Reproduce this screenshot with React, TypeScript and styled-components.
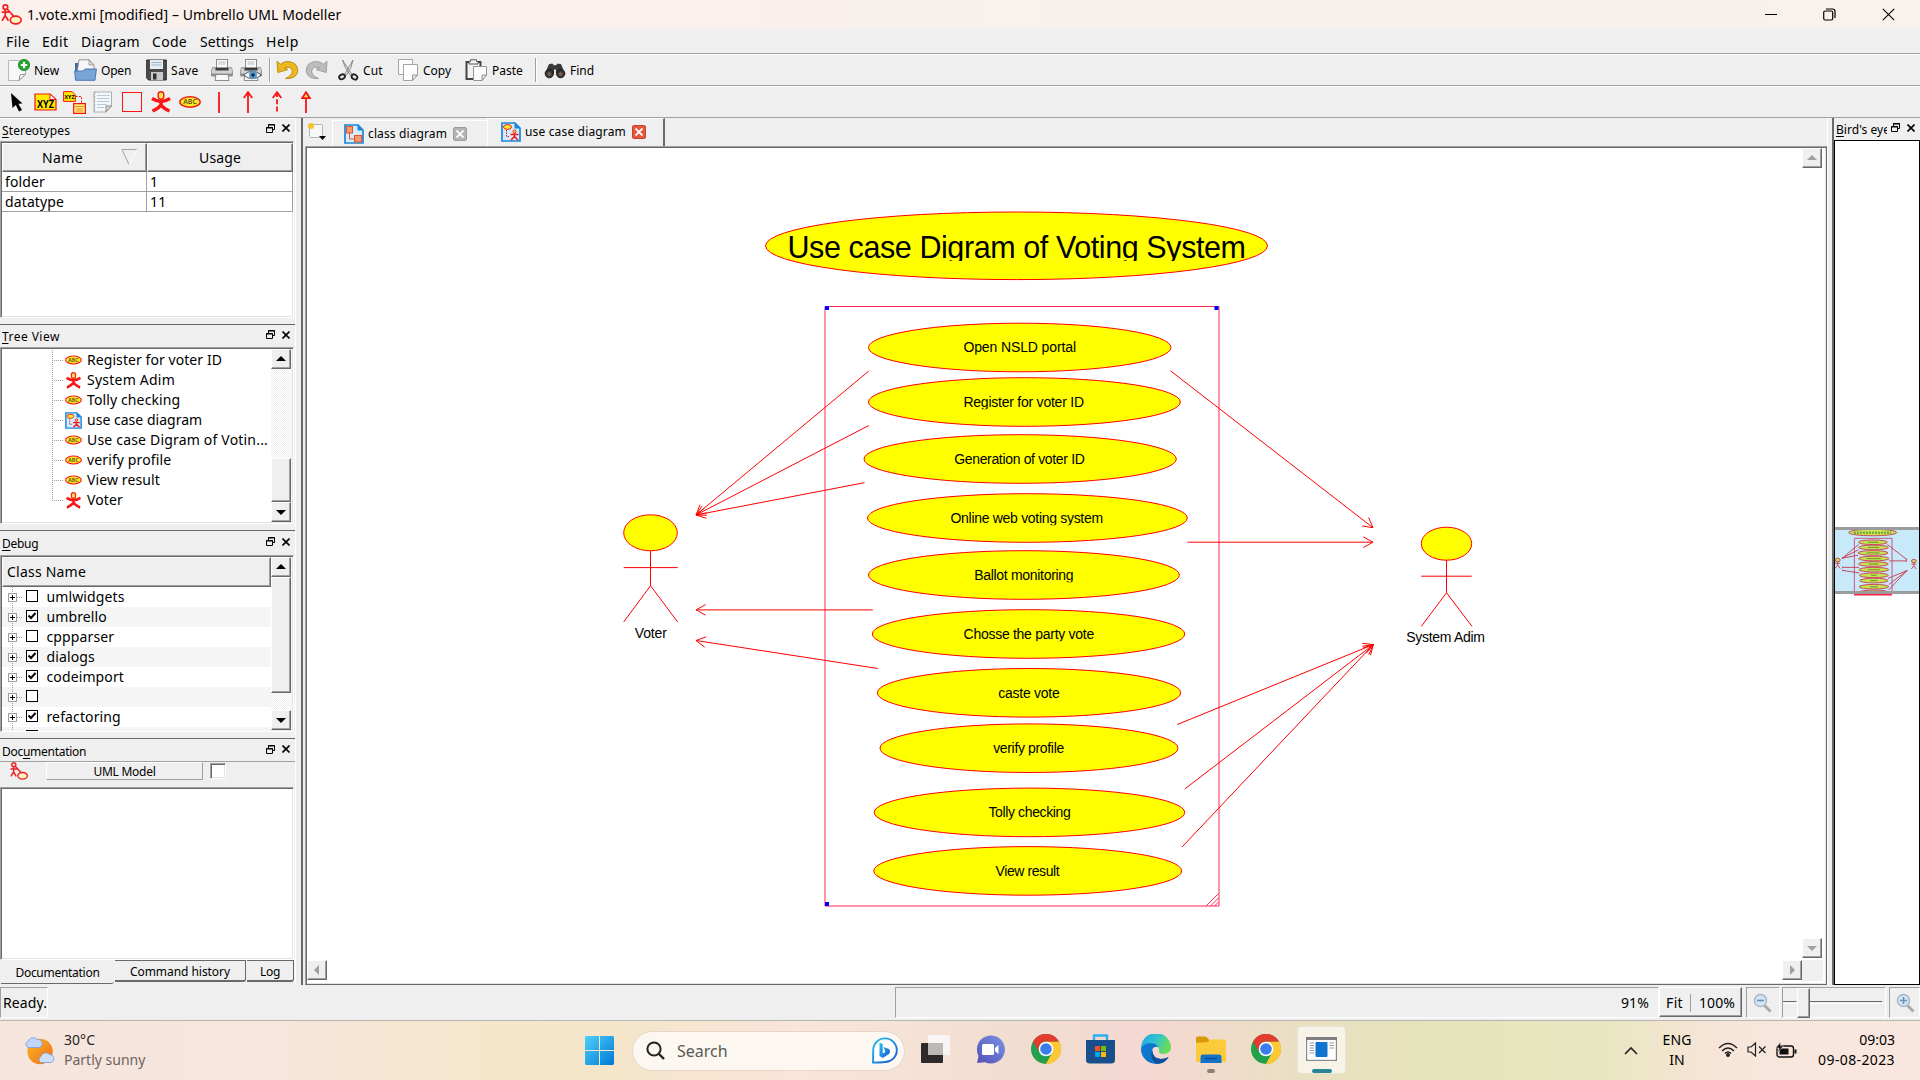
import React from "react";
import styled, { createGlobalStyle, css } from "styled-components";

const UI = `"Noto Sans", "Open Sans", sans-serif`;
const FACE = "#efefef";
const SHADE = "#a0a0a0";
const DARK = "#696969";

const Global = createGlobalStyle`
  * { box-sizing: border-box; }
  html, body { margin: 0; padding: 0; overflow: hidden; }
  body { font-family: ${UI}; font-size: 14px; line-height: 20px; color: #000; }
  svg { display: block; flex: none; }
`;

const raised = css`
  background: ${FACE};
  border: 1px solid;
  border-color: #fff ${DARK} ${DARK} #fff;
  box-shadow: inset -1px -1px 0 ${SHADE};
`;
const sunken = css`
  border: 1px solid;
  border-color: ${SHADE} #fff #fff ${SHADE};
  box-shadow: inset 1px 1px 0 ${DARK}, inset -1px -1px 0 #e3e3e3;
`;

const Screen = styled.div`
  width: 1920px;
  height: 1080px;
  display: flex;
  flex-direction: column;
  background: ${FACE};
`;

/* ---------- text ---------- */
const Label = styled.span<{ $small?: boolean; $gap?: number; $color?: string }>`
  font-size: ${(p) => (p.$small ? 12 : 14)}px;
  letter-spacing: ${(p) => p.$gap ?? 0.12}px;
  color: ${(p) => p.$color ?? "#000"};
  white-space: pre;
`;

/* ---------- title and menus ---------- */
const TitleBar = styled.header`
  height: 29px;
  display: flex;
  align-items: center;
  padding-left: 1px;
  background: linear-gradient(90deg, #fcf0ec 0%, #faf0ec 35%, #f6f1eb 70%, #f8f1ec 100%);
`;
const TitleText = styled(Label)`
  margin-left: 5px;
  flex: 1;
`;
const WindowButtons = styled.div`
  display: flex;
  gap: 46px;
  padding-right: 25px;
`;
const MenuBar = styled.nav`
  height: 25px;
  display: flex;
  align-items: center;
  padding: 1px 0 0 6px;
  border-bottom: 1px solid ${SHADE};
`;
const MenuItem = styled(Label)<{ $w: number }>`
  width: ${(p) => p.$w}px;
`;

/* ---------- toolbars ---------- */
const Toolbar = styled.div`
  height: 32px;
  display: flex;
  align-items: center;
  padding-left: 8px;
  border-top: 1px solid #fff;
  border-bottom: 1px solid ${SHADE};
`;
const Tool = styled.div<{ $w: number }>`
  width: ${(p) => p.$w}px;
  display: flex;
  align-items: center;
  gap: 4px;
  line-height: 22px;
`;
const ToolLabel = styled(Label)`
  padding-top: 1px;
`;
const ToolSeparator = styled.i<{ $after: number }>`
  width: 2px;
  height: 24px;
  margin-right: ${(p) => p.$after}px;
  border-left: 1px solid ${SHADE};
  border-right: 1px solid #fff;
`;

/* ---------- workspace ---------- */
const Workspace = styled.div`
  height: 867px;
  display: flex;
`;
const LeftColumn = styled.aside`
  width: 295px;
  flex: none;
  display: flex;
  flex-direction: column;
`;
const Splitter = styled.div<{ $w: number }>`
  width: ${(p) => p.$w}px;
  flex: none;
  border-right: 2px solid ${DARK};
  border-left: 1px solid #fff;
`;
const Dock = styled.section<{ $h: number; $first?: boolean; $last?: boolean }>`
  height: ${(p) => p.$h}px;
  padding-bottom: ${(p) => (p.$last ? 0 : 6)}px;
  display: flex;
  flex-direction: column;
  border-top: ${(p) => (p.$first ? "1px solid #fff" : `1px solid ${DARK}`)};
`;
const DockHead = styled.div<{ $h: number; $line?: boolean; $drop: number }>`
  height: ${(p) => p.$h}px;
  flex: none;
  display: flex;
  align-items: center;
  padding: ${(p) => p.$drop}px 5px 0 2px;
  border-bottom: ${(p) => (p.$line ? 1 : 0)}px solid ${SHADE};
  overflow: hidden;
`;
const DockTitle = styled(Label)`
  flex: 1;
  min-width: 0;
  margin-right: 4px;
  overflow: hidden;
`;
const Mnemonic = styled.span`
  text-decoration: underline;
  text-underline-offset: 2px;
`;
const DockButtons = styled.div`
  display: flex;
  gap: 7px;
  padding-bottom: 5px;
  align-items: center;
`;
const SunkenBox = styled.div`
  ${sunken}
  flex: 1;
  min-height: 0;
  margin-right: 1px;
  padding: 1px;
  display: flex;
  background: #fff;
  overflow: hidden;
`;

const Table = styled.div`
  flex: 1;
  display: grid;
  grid-template-columns: 145px 146px;
  grid-template-rows: 29px 20px 20px;
`;
const HeadCell = styled.div`
  ${raised}
  display: flex;
  align-items: center;
  justify-content: center;
  position: relative;
`;
const SortMark = styled.svg`
  position: absolute;
  right: 8px;
  top: 4px;
`;
const Cell = styled.div`
  padding-left: 3px;
  border-right: 1px solid ${SHADE};
  border-bottom: 1px solid ${SHADE};
  line-height: 20px;
`;

const ScrollTrack = styled.div`
  width: 21px;
  flex: none;
  display: flex;
  flex-direction: column;
  background: repeating-conic-gradient(#fff 0 25%, #efefef 0 50%) 0 0 / 2px 2px;
`;
const ScrollButton = styled.div`
  ${raised}
  width: 20px;
  height: 20px;
  display: flex;
  align-items: center;
  justify-content: center;
`;
const ScrollGap = styled.div`
  flex: 1;
`;
const ScrollThumb = styled.div<{ $h: number }>`
  ${raised}
  width: 20px;
  height: ${(p) => p.$h}px;
`;

const TreeList = styled.div`
  flex: 1;
  padding: 1px 0 0 50px;
`;
const TreeRow = styled.div`
  height: 20px;
  display: flex;
  align-items: center;
`;
const Branch = styled.i<{ $last: boolean }>`
  width: 11px;
  height: 20px;
  margin-right: 2px;
  background:
    repeating-linear-gradient(90deg, ${SHADE} 0 1px, transparent 1px 2px) 0 10px / 11px 1px no-repeat,
    repeating-linear-gradient(${SHADE} 0 1px, transparent 1px 2px) 0 0 / 1px ${(p) => (p.$last ? 10 : 20)}px no-repeat;
`;
const TreeText = styled(Label)`
  margin-left: 5px;
`;

const DebugList = styled.div`
  flex: 1;
`;
const DebugHead = styled.div`
  ${raised}
  height: 30px;
  display: flex;
  align-items: center;
  padding-left: 4px;
`;
const DebugRow = styled.div<{ $alt: boolean }>`
  height: 20px;
  display: flex;
  align-items: center;
  padding-left: 6px;
  background: ${(p) => (p.$alt ? "#f5f5f5" : "#fff")};
`;
const DebugText = styled(Label)`
  margin-left: 8.5px;
`;

const DocBar = styled.div`
  height: 25px;
  flex: none;
  display: flex;
  align-items: flex-start;
  padding-left: 10px;
`;
const DocButton = styled.div`
  width: 157px;
  height: 18px;
  margin: 0 7px 0 18px;
  text-align: center;
  line-height: 16px;
  border: 1px solid;
  border-color: #fff ${SHADE} ${SHADE} #fff;
`;
const DocCheck = styled.div`
  ${sunken}
  width: 16px;
  height: 16px;
  margin-top: 1px;
  background: #fff;
`;
const DockTabs = styled.div`
  height: 25px;
  flex: none;
  display: flex;
  align-items: flex-start;
`;
const DockTab = styled.div<{ $w: number; $on?: boolean }>`
  width: ${(p) => p.$w}px;
  height: ${(p) => (p.$on ? 24 : 22)}px;
  margin-left: 1px;
  text-align: center;
  line-height: ${(p) => (p.$on ? 24 : 20)}px;
  border-style: solid;
  border-color: ${DARK};
  border-width: ${(p) => (p.$on ? "0 0 1px 0" : "1px 1px 2px 0")};
  border-bottom-right-radius: 3px;
`;

/* ---------- centre ---------- */
const Centre = styled.main`
  width: 1524px;
  flex: none;
  display: flex;
  flex-direction: column;
`;
const TabStrip = styled.div`
  height: 28px;
  display: flex;
  align-items: flex-end;
  padding-left: 4px;
`;
const NewTab = styled.div`
  width: 25px;
  height: 24px;
`;
const DiagramTab = styled.div<{ $w: number; $on?: boolean }>`
  width: ${(p) => p.$w}px;
  height: ${(p) => (p.$on ? 28 : 26)}px;
  display: flex;
  align-items: center;
  padding: ${(p) => (p.$on ? "0 0 2px 13px" : "0 0 0 11px")};
  border-top: 1px solid #fff;
  border-left: 1px solid #fff;
  border-right: ${(p) => (p.$on ? `2px solid ${DARK}` : "0")};
`;
const TabText = styled(Label)`
  margin: 0 6px 0 4px;
`;
const CloseBox = styled.div<{ $on?: boolean }>`
  width: 14px;
  height: 14px;
  display: flex;
  align-items: center;
  justify-content: center;
  border-radius: 2px;
  border: 1px solid ${(p) => (p.$on ? "#c7412b" : "#9b9b9b")};
  background: ${(p) => (p.$on ? "#e2593f" : "#b4b4b4")};
`;
const CanvasFrame = styled.div`
  ${sunken}
  flex: 1;
  display: grid;
  grid-template-columns: 1495px 21px;
  grid-template-rows: 812px 21px;
  margin-left: 2px;
  background: #fff;
  border-right-color: ${DARK};
  border-bottom-color: ${DARK};
  padding: 1px 4px 1px 1px;
`;
const HScroll = styled.div`
  display: flex;
  justify-content: space-between;
`;
const Corner = styled.div`
  background: ${FACE};
`;
const VScroll = styled.div`
  display: flex;
  flex-direction: column;
  justify-content: space-between;
  padding-bottom: 2px;
`;

/* ---------- overview ---------- */
const RightColumn = styled.aside`
  flex: 1;
  min-width: 0;
  display: flex;
  flex-direction: column;
`;
const Overview = styled.div`
  flex: 1;
  display: flex;
  flex-direction: column;
  padding-top: 386px;
  border: 1px solid #000;
  background: #fff;
`;

/* ---------- status ---------- */
const StatusBar = styled.footer`
  height: 36px;
  display: flex;
  align-items: flex-start;
  padding-top: 2px;
  border-bottom: 1px solid #b8b4ae;
`;
const StatusCell = styled.div<{ $w: number; $after?: number }>`
  width: ${(p) => p.$w}px;
  height: 31px;
  flex: none;
  margin-right: ${(p) => p.$after ?? 0}px;
  display: flex;
  align-items: center;
  padding: 1px 0 0 2px;
  border: 1px solid;
  border-color: ${SHADE} #fff #fff ${SHADE};
`;
const StatusSpace = styled.div`
  width: 847px;
`;
const ZoomValue = styled(Label)`
  flex: 1;
  text-align: right;
  padding-right: 9px;
`;
const ZoomButtons = styled.div`
  ${raised}
  width: 83px;
  height: 30px;
  flex: none;
  margin-right: 4px;
  display: flex;
  align-items: center;
  padding: 1px 0 0 6px;
`;
const ZoomDivider = styled.i`
  width: 1px;
  height: 18px;
  margin: 0 8px 0 7px;
  background: ${SHADE};
`;
const SliderCell = styled(StatusCell)`
  padding: 0;
`;
const Groove = styled.div<{ $w: number }>`
  width: ${(p) => p.$w}px;
  height: 3px;
  border: 1px solid;
  border-color: ${DARK} #fff #fff ${DARK};
  border-left-width: 0;
`;
const SliderThumb = styled.div`
  ${raised}
  width: 13px;
  height: 30px;
`;
const MagnifyPad = styled.div`
  padding-left: 4px;
`;

/* ---------- taskbar ---------- */
const Taskbar = styled.footer`
  height: 59px;
  display: flex;
  align-items: center;
  background: linear-gradient(90deg, #f6e5dc 0, #f6e6de 250px, #f5e6cc 480px, #f5e5cb 620px, #fae5da 800px, #f1ddd0 1030px, #f5d8d2 1150px, #eadfc3 1290px, #e6e4bb 1420px, #e8e6c0 1600px, #f6e5d7 1710px, #f9e7df 1820px, #f9e6de 1920px);
`;
const Weather = styled.div`
  width: 585px;
  display: flex;
  align-items: center;
  padding-left: 25px;
  gap: 8px;
`;
const Stack = styled.div<{ $align?: string; $w?: number }>`
  ${(p) => (p.$w ? `width: ${p.$w}px;` : "")}
  display: flex;
  flex-direction: column;
  align-items: ${(p) => p.$align ?? "flex-start"};
  padding-bottom: 1px;
`;
const SearchBox = styled.div`
  width: 273px;
  height: 40px;
  margin: 0 3px 0 18px;
  padding: 0 6px 0 13px;
  display: flex;
  align-items: center;
  border-radius: 20px;
  border: 1px solid #e6d6cb;
  background: #fdf7f2;
`;
const SearchText = styled.span`
  flex: 1;
  margin-left: 12px;
  font-size: 16px;
  color: #5c5855;
`;
const AppSlot = styled.div<{ $on?: boolean }>`
  width: ${(p) => (p.$on ? 49 : 55)}px;
  height: 48px;
  margin-left: ${(p) => (p.$on ? 4 : 0)}px;
  display: flex;
  flex-direction: column;
  align-items: center;
  justify-content: flex-end;
  border-radius: 5px;
  background: ${(p) => (p.$on ? "rgba(255,255,255,.62)" : "transparent")};
  border: 1px solid ${(p) => (p.$on ? "rgba(120,110,90,.12)" : "transparent")};
`;
const AppMark = styled.i<{ $kind?: "dot" | "bar" }>`
  width: ${(p) => (p.$kind === "bar" ? 20 : 8)}px;
  height: 4px;
  margin-top: ${(p) => (p.$kind === "bar" ? 8 : 5)}px;
  border-radius: 2px;
  background: ${(p) => (p.$kind === "bar" ? "#2a8594" : p.$kind === "dot" ? "#8d8279" : "transparent")};
`;
const Apps = styled.div`
  display: flex;
  align-items: center;
  padding-bottom: 1px;
`;
const Tray = styled.div`
  flex: 1;
  display: flex;
  align-items: center;
  justify-content: flex-end;
  padding-right: 25px;
`;
const TrayIcons = styled.div`
  display: flex;
  align-items: center;
  gap: 9px;
  margin: 0 21px 0 2px;
  padding-bottom: 2px;
`;

/* ---------- drawings ---------- */
const UmbrelloIcon = ({ s = 20 }: { s?: number }) => (
  <svg width={s} height={s} viewBox="0 0 20 20" fill="none" stroke="#f02020" strokeWidth="1.6">
    <circle cx="4.2" cy="3" r="2.2" />
    <path d="M4 5.5V11M0.6 7.8H7.6M4 11L1 16M4 11L7 16M6 5L12 11.5" />
    <ellipse cx="14" cy="15.3" rx="5.2" ry="3.7" fill="#fdf6c0" />
  </svg>
);
const UseCaseIcon = ({ w = 22, h = 12 }: { w?: number; h?: number }) => (
  <svg width={w} height={h} viewBox="0 0 22 12">
    <ellipse cx="11" cy="6" rx="10.2" ry="5.2" fill="#ffe92a" stroke="#f01818" strokeWidth="1.4" />
    <text x="4.3" y="8.4" fontSize="6.500" fontWeight="600" textLength="13.5" lengthAdjust="spacingAndGlyphs" fontFamily="Open Sans" fill="#54430a">ABC</text>
  </svg>
);
const ActorIcon = ({ s = 22 }: { s?: number }) => (
  <svg width={s} height={s} viewBox="0 0 22 22">
    <path d="M2 7.5Q7 10.5 11 10.5T20 7.5M11 9V15M11 14Q8 18 2.5 20M11 14Q14 18 19.5 20" fill="none" stroke="#fb1414" strokeWidth="3.4" />
    <ellipse cx="11" cy="4.5" rx="2.9" ry="3.7" fill="#ffe74a" stroke="#fb1414" strokeWidth="1.4" />
  </svg>
);
const NewIcon = () => (
  <svg width="22" height="22" viewBox="0 0 22 22">
    <path d="M.5 1.5H17.5V15L11 21.5H.5Z" fill="#f8f8f8" stroke="#b8b8b8" />
    <path d="M11 21.5L12 16L17.5 15Z" fill="#fff" stroke="#909090" />
    <circle cx="16" cy="6" r="5.6" fill="#23a52c" stroke="#15801d" strokeWidth=".8" />
    <path d="M16 2.8V9.2M12.8 6H19.2" stroke="#fff" strokeWidth="2.2" />
  </svg>
);
const OpenIcon = () => (
  <svg width="23" height="22" viewBox="0 0 23 22">
    <path d="M1 4H8L10 6V20H1Z" fill="#3c6ca5" />
    <path d="M5 .8H15L20 6V14H3Z" fill="#f7f7f7" stroke="#8a8a8a" strokeWidth=".9" />
    <path d="M15 .8V6H20Z" fill="#ddd" stroke="#888" strokeWidth=".7" />
    <path d="M.6 12H9L11 10H22.4L21 21.3H1.6Z" fill="#79a4d6" stroke="#3f70ad" strokeWidth=".9" />
  </svg>
);
const SaveIcon = () => (
  <svg width="21" height="22" viewBox="0 0 21 22">
    <path d="M.7 1H20.3V21H2.5L.7 19Z" fill="#4b4b4b" stroke="#2b2b2b" />
    <rect x="4" y="1" width="13" height="9" fill="#e6edf2" />
    <path d="M5.5 3.5H15.5M5.5 6H15.5" stroke="#9bb4c6" />
    <rect x="5" y="13" width="12" height="8" fill="#c9c9c9" />
    <rect x="7" y="14.5" width="3.5" height="6" fill="#333" />
  </svg>
);
const PrintIcon = ({ preview }: { preview?: boolean }) => (
  <svg width="22" height="22" viewBox="0 0 22 22">
    <rect x="5.5" y=".5" width="11" height="9" fill="#fafafa" stroke="#8c8c8c" />
    <path d="M7.5 3H14.5M7.5 5H14.5" stroke="#bbb" />
    <path d="M1.500 8.500H4V10H18V8.500H20.500L21.500 12V16.500H.5V12Z" fill="#d2d2d2" stroke="#8a8a8a" strokeWidth=".8" />
    <path d="M4.500 8.500H17.500V11.500H4.500Z" fill="#3c3c3c" />
    <path d="M.5 14.500H21.500V17.500H.5Z" fill="#8f8f8f" />
    <path d="M5 15.5H17L18 21.5H4Z" fill="#f8f8f8" stroke="#8c8c8c" />
    {preview && (
      <g>
        <path d="M3.5 16Q12 8.5 21.5 16Q12 23.5 3.5 16Z" fill="#f4f6f8" stroke="#555" />
        <circle cx="13" cy="16" r="4" fill="#5a98cc" />
        <circle cx="13" cy="16" r="1.7" fill="#102a44" />
      </g>
    )}
  </svg>
);
const UndoIcon = ({ redo }: { redo?: boolean }) => (
  <svg width="23" height="20" viewBox="0 0 23 20">
    <path
      transform={redo ? "translate(23 0) scale(-1 1)" : undefined}
      d="M1 1.2L1.8 12.5L12 9.5L8.5 8Q14.5 5.5 16.3 10.5Q17 15 9.5 18.6Q20.5 19 21.7 11.5Q22 2.5 12.5 1.5Q7.5 1.2 4.5 4.3Z"
      fill={redo ? "#bdbdbd" : "#eeb81f"}
      stroke={redo ? "#9a9a9a" : "#b8860b"}
      strokeWidth=".9"
    />
  </svg>
);
const CutIcon = () => (
  <svg width="21" height="22" viewBox="0 0 21 22">
    <path d="M4.5 1L14 15.5L12.2 16.2Q6 8 4.5 1ZM15 1L6.5 15.5L8.4 16.2Q14 9 15 1Z" fill="#e2e2e2" stroke="#777" strokeWidth=".8" />
    <ellipse cx="4" cy="17.8" rx="3" ry="2.3" transform="rotate(-30 4 17.8)" fill="none" stroke="#222" strokeWidth="1.9" />
    <ellipse cx="16.5" cy="18" rx="3" ry="2.3" transform="rotate(30 16.5 18)" fill="none" stroke="#222" strokeWidth="1.9" />
  </svg>
);
const CopyIcon = () => (
  <svg width="21" height="22" viewBox="0 0 21 22">
    <path d="M.5.5H14.5V15.5H.5Z" fill="#fbfbfb" stroke="#a4a4a4" />
    <path d="M5.5 5.5H19.5V16L14.5 21.5H5.5Z" fill="#fdfdfd" stroke="#a4a4a4" />
    <path d="M14.5 21.5V16H19.5Z" fill="#e9e9e9" stroke="#999" />
  </svg>
);
const PasteIcon = () => (
  <svg width="23" height="22" viewBox="0 0 23 22">
    <path d="M1.5 3H15.5V20H1.5Z" fill="#f2f2f2" stroke="#444" strokeWidth="2" />
    <path d="M5.5.8H11.5V2.5H13V5H4V2.5H5.5Z" fill="#f8f8f8" stroke="#555" />
    <path d="M8.5 7.5H21.5V16L17 21.5H8.5Z" fill="#fbfbfb" stroke="#949494" />
    <path d="M17 21.5V16H21.5Z" fill="#e4e4e4" stroke="#949494" />
  </svg>
);
const FindIcon = () => (
  <svg width="22" height="17" viewBox="0 0 22 18">
    <path d="M4.5 2.5L8 1.5L10 3.5H12L14 1.5L17.5 2.5L21.5 12H12V8H10V12H.5Z" fill="#3a3a3a" />
    <circle cx="5" cy="12.3" r="4.4" fill="#333" stroke="#151515" />
    <circle cx="17" cy="12.3" r="4.4" fill="#333" stroke="#151515" />
    <circle cx="5" cy="12.8" r="2.2" fill="#7a5a4c" />
    <circle cx="17" cy="12.8" r="2.2" fill="#7a5a4c" />
  </svg>
);
const CursorIcon = () => (
  <svg width="16" height="20" viewBox="0 0 16 20">
    <path d="M3 1L14.500 11.5L10.300 11.800L14 18L11 19.400L7.800 13L4.500 16Z" fill="#000" />
  </svg>
);
const ClassIcon = () => (
  <svg width="23" height="18" viewBox="0 0 23 18">
    <path d="M1 1H16L22 6.5V17H1Z" fill="#ffe900" stroke="#f01414" strokeWidth="1.2" />
    <path d="M16 1V6.5H22Z" fill="#fff" stroke="#f01414" />
    <text x="3" y="14.5" fontSize="10" fontWeight="700" textLength="17" lengthAdjust="spacingAndGlyphs" fontFamily="Open Sans">XYZ</text>
  </svg>
);
const PackageIcon = () => (
  <svg width="23" height="23" viewBox="0 0 23 23">
    <path d="M.6.6H9L12.4 4V10.4H.6Z" fill="#ffe900" stroke="#f01414" />
    <text x="1.5" y="8.3" fontSize="6" fontWeight="700" textLength="10" lengthAdjust="spacingAndGlyphs" fontFamily="Open Sans">XYZ</text>
    <path d="M12.5 5.5H18.5V12" fill="none" stroke="#f01414" strokeDasharray="2 1.4" />
    <path d="M10.7 12.6H22.4V22.3H10.7Z" fill="#fff27a" stroke="#f01414" strokeWidth="1.2" />
    <path d="M10.7 15.6H22.4M13 18H20M13 20H20" stroke="#f08030" />
  </svg>
);
const NoteIcon = () => (
  <svg width="20" height="22" viewBox="0 0 20 22">
    <path d="M1 1H18.5V15L13 21H1Z" fill="#f4f6f8" stroke="#a8adb2" />
    <path d="M4 4.5H16.5M4 7.5H16.5M4 10.5H16.5M4 13.5H14M4 16.5H11" stroke="#b6cadb" />
    <path d="M13 21V15H18.5Z" fill="#ddd" stroke="#888" />
    <path d="M1.7 1V21" stroke="#999" strokeDasharray="1 1" />
  </svg>
);
const BoxIcon = () => (
  <svg width="21" height="21" viewBox="0 0 21 21">
    <rect x=".5" y=".5" width="19" height="19" fill="none" stroke="#fb1414" />
  </svg>
);
const LineIcon = ({ kind }: { kind: "line" | "arrow" | "dash" | "gen" }) => (
  <svg width="11" height="22" viewBox="0 0 11 22" fill="none" stroke="#fb1414" strokeWidth="1.8">
    <path d="M5 1V22" strokeDasharray={kind === "dash" ? "5 2.2" : undefined} />
    {(kind === "arrow" || kind === "dash") && <path d="M.7 7L5 1.2L9.300 7" />}
    {kind === "gen" && <path d="M1.100 7.2L5 1.2L8.900 7.2Z" fill="#ffe94a" />}
  </svg>
);
const FloatIcon = () => (
  <svg width="9" height="9" viewBox="0 0 9 9" fill="none" stroke="#000">
    <path d="M2.5 3V.5H8.5V5.5H6.5M2 1H9M.5 3.5H6.5V8.5H.5ZM0 4H7" />
  </svg>
);
const CrossIcon = ({ s = 8, c = "#000", w = 1.6 }: { s?: number; c?: string; w?: number }) => (
  <svg width={s} height={s} viewBox="0 0 8 8" stroke={c} strokeWidth={w}>
    <path d="M.5.5L7.5 7.5M7.5.5L.5 7.5" />
  </svg>
);
const Arrow = ({ dir, c = "#000" }: { dir: "up" | "down" | "left" | "right"; c?: string }) => {
  const d = { up: "M0 7L5 2L10 7Z", down: "M0 3L5 8L10 3Z", left: "M7 0L2 5L7 10Z", right: "M3 0L8 5L3 10Z" }[dir];
  return (
    <svg width="10" height="10" viewBox="0 0 10 10">
      <path d={d} fill={c} />
    </svg>
  );
};
const DiagramFileIcon = ({ kind, s = 20 }: { kind: "class" | "use"; s?: number }) => (
  <svg width={s} height={s} viewBox="0 0 20 20">
    <path d="M1 1H14L19 6V19H1Z" fill="#d3ecfb" stroke="#1c86dc" strokeWidth="1.7" />
    <path d="M13.5.5L19.5 6.5H13.5Z" fill="#1c86dc" />
    {kind === "class" ? (
      <g fill="#f79a70" stroke="#e2532a">
        <rect x="2.5" y="2.5" width="6" height="6.5" />
        <rect x="10.5" y="11.5" width="7" height="6.5" />
        <path d="M5.5 9V15H10.5" fill="none" />
      </g>
    ) : (
      <g fill="none" stroke="#f01818">
        <ellipse cx="6.5" cy="5" rx="4" ry="2.400" fill="#ffe92a" />
        <path d="M5.5 8V14.5H9" strokeDasharray="1.5 1" />
        <circle cx="13.5" cy="9.5" r="1.5" fill="#ffe92a" />
        <path d="M9.5 12.5H17.5M13.5 11V15M13.5 14.5L10 18M13.5 14.5L17 18" strokeWidth="1.6" />
      </g>
    )}
  </svg>
);
const NewTabIcon = () => (
  <svg width="20" height="20" viewBox="0 0 20 20">
    <rect x="2.5" y="2.5" width="13" height="13" rx="1" fill="#f7f7f7" stroke="#b4b4b4" />
    <circle cx="4" cy="4" r="3" fill="#f2c327" />
    <path d="M12 14H19L15.5 18Z" fill="#000" />
  </svg>
);
const Expander = () => (
  <svg width="16" height="20" viewBox="0 0 16 20">
    <path d="M4.5 0V20M9 10.5H15" stroke={SHADE} strokeDasharray="1 1" />
    <rect x=".5" y="6.5" width="8" height="8" fill="#fff" stroke={SHADE} />
    <path d="M2 10.5H7M4.5 8V13" stroke="#000" />
  </svg>
);
const Check = ({ on }: { on: boolean }) => (
  <svg width="14" height="20" viewBox="0 0 14 20">
    <rect x="2.5" y="3.5" width="11" height="11" fill="#fff" stroke="#000" />
    {on && <path d="M4.5 8.5L7 11L11.5 6" fill="none" stroke="#000" strokeWidth="2" />}
  </svg>
);
const ZoomIcon = ({ plus }: { plus?: boolean }) => (
  <svg width="19" height="20" viewBox="0 0 19 20">
    <path d="M11.5 12.5L17.5 18.5" stroke="#a9a9a9" strokeWidth="3" />
    <circle cx="7.5" cy="7.5" r="6" fill="#d5e5f4" stroke="#a7b6c6" strokeWidth="1.5" />
    <path d={plus ? "M4 7.5H11M7.5 4V11" : "M4 7.5H11"} stroke="#6f90bb" strokeWidth="1.7" />
  </svg>
);
const Magnify = ({ plus }: { plus?: boolean }) => (
  <MagnifyPad>
    <ZoomIcon plus={plus} />
  </MagnifyPad>
);

/* ---------- diagram model ---------- */
type Case = { name: string; x1: number; x2: number; y: number; tx: number; tw: number };
const cases: Case[] = [
  { name: "Open NSLD portal", x1: 868.5, x2: 1171, y: 347.5, tx: 963.4, tw: 112.6 },
  { name: "Register for voter ID", x1: 868.5, x2: 1180.3, y: 402, tx: 963.4, tw: 120.6 },
  { name: "Generation of voter ID", x1: 864, x2: 1176.3, y: 459, tx: 954.2, tw: 130.6 },
  { name: "Online web voting system", x1: 867.5, x2: 1187.3, y: 518, tx: 950.5, tw: 152.6 },
  { name: "Ballot monitoring", x1: 868.5, x2: 1179.3, y: 575, tx: 974.2, tw: 99.4 },
  { name: "Chosse the party vote", x1: 872.3, x2: 1184.7, y: 634, tx: 963.6, tw: 130.6 },
  { name: "caste vote", x1: 877.3, x2: 1180.7, y: 692.8, tx: 998.2, tw: 61.6 },
  { name: "verify profile", x1: 880, x2: 1178, y: 748.2, tx: 993.2, tw: 71 },
  { name: "Tolly checking", x1: 874.2, x2: 1184.7, y: 812.4, tx: 988.4, tw: 82.4 },
  { name: "View result", x1: 873.8, x2: 1181.7, y: 870.9, tx: 995.6, tw: 64 },
];
const links: [number, number, number, number][] = [
  [868.8, 371, 696, 515],
  [868.8, 425.5, 696, 515],
  [864.5, 482.7, 696, 515],
  [872.8, 609.9, 696, 609.9],
  [877.9, 668.5, 696, 640.5],
  [1170.5, 370.8, 1373, 527.7],
  [1187.5, 542.2, 1373, 542.2],
  [1177.3, 724.5, 1373.3, 644.6],
  [1184.7, 789, 1373.3, 644.6],
  [1182, 847, 1373.3, 644.6],
];
const headPath = ([x1, y1, x2, y2]: [number, number, number, number]) => {
  const a = Math.atan2(y2 - y1, x2 - x1);
  const wing = (t: number) => `${x2 - 11 * Math.cos(a + t)} ${y2 - 11 * Math.sin(a + t)}`;
  return `M${wing(0.5)}L${x2} ${y2}L${wing(-0.5)}`;
};

const DiagramShapes = ({ fill, line, frame, labels }: { fill: string; line: string; frame: string; labels: boolean }) => {
  const shape = { stroke: line, fill, vectorEffect: "non-scaling-stroke" as const };
  return (
    <g fontFamily="'Liberation Sans', Arial, sans-serif" fontSize="14" fill="none" strokeWidth="1">
      <rect x="825" y="306.5" width="394" height="599.500" stroke={frame} vectorEffect="non-scaling-stroke" />
      <ellipse cx="1016.5" cy="245.8" rx="251" ry="33.8" {...shape} />
      {cases.map((c) => (
        <ellipse key={c.name} cx={(c.x1 + c.x2) / 2} cy={c.y} rx={(c.x2 - c.x1) / 2} ry="24.3" {...shape} />
      ))}
      <ellipse cx="650.5" cy="532.8" rx="26.8" ry="18" {...shape} />
      <ellipse cx="1446.5" cy="543.7" rx="25.2" ry="16.5" {...shape} />
      <g stroke={line}>
        <path vectorEffect="non-scaling-stroke" d="M650.5 550.6V585.7M623.7 567.6H677.7M650.5 585.7L623.7 622M650.5 585.7L677.7 622" />
        <path vectorEffect="non-scaling-stroke" d="M1446.5 560.2V592.8M1421.3 576.2H1471.7M1446.5 592.8L1421.3 626.4M1446.5 592.8L1472 626.4" />
        {links.map((l, i) => (
          <path key={i} vectorEffect="non-scaling-stroke" d={`M${l[0]} ${l[1]}L${l[2]} ${l[3]}${headPath(l)}`} />
        ))}
      </g>
      {labels && (
        <g fill="#000" stroke="none">
          <clipPath id="title-clip">
            <rect x="766" y="212" width="502" height="49" />
          </clipPath>
          <text x="787.5" y="258" fontSize="30.5" textLength="458.5" clipPath="url(#title-clip)">Use case Digram of Voting System</text>
          {cases.map((c) => (
            <g key={c.name}>
              <clipPath id={`clip-${c.y}`}>
                <rect x={c.x1} y={c.y - 15} width={c.x2 - c.x1} height="22.3" />
              </clipPath>
              <text x={c.tx} y={c.y + 4.8} textLength={c.tw} clipPath={`url(#clip-${c.y})`}>{c.name}</text>
            </g>
          ))}
          <text x="634.8" y="638" textLength="32">Voter</text>
          <text x="1406.3" y="642" textLength="78.6">System Adim</text>
        </g>
      )}
    </g>
  );
};

const DiagramCanvas = () => (
  <svg width="1495" height="812" viewBox="307 148 1495 812">
    <DiagramShapes fill="#ffff00" line="#ff0000" frame="#ff2a55" labels />
    <path d="M1206 906L1218.5 893.5M1210.5 906L1218.5 898M1214.5 906L1218.5 902" stroke="#ff2a55" />
    <g fill="#0000ff">
      <rect x="825" y="306" width="4" height="4" />
      <rect x="1214.5" y="306" width="4" height="4" />
      <rect x="825" y="902" width="4" height="4" />
    </g>
  </svg>
);
const OverviewDrawing = () => (
  <svg width="84" height="69" viewBox="1835 527 84 69">
    <rect x="1834" y="527" width="85" height="67" fill="#c8e9fa" />
    <g transform="translate(1775.4 509) scale(.0957)">
      <DiagramShapes fill="#c3e552" line="#cb4a5e" frame="#c45a86" labels={false} />
    </g>
    <path d="M1834 594H1919V596H1834Z" fill="#fff" />
    <path d="M1854 594.8H1892" stroke="#ff1f44" strokeWidth="1.4" />
    <path d="M1854 532.8H1891" stroke="#7d9a3a" strokeWidth="2" strokeDasharray="2 1" />
    {cases.map((c) => (
      <path key={c.name} d={`M${1775.4 + c.tx * 0.0957} ${509 + c.y * 0.0957}h${c.tw * 0.0957}`} stroke="#7d9a3a" strokeWidth="1.2" />
    ))}
    <path d="M1834 528.5H1919M1834 592.5H1919" stroke="#9c9c9c" strokeWidth="3" />
  </svg>
);

/* ---------- taskbar drawings ---------- */
const WeatherIcon = () => (
  <svg width="31" height="30" viewBox="0 0 31 30">
    <defs>
      <linearGradient id="sun" x1="0" y1="0" x2="1" y2="1">
        <stop offset="0" stopColor="#f9bb2d" />
        <stop offset="1" stopColor="#ee6a10" />
      </linearGradient>
    </defs>
    <circle cx="15" cy="15.5" r="12.7" fill="url(#sun)" />
    <path d="M3 11.5A3.5 3.5 0 0 1 3.500 5A5 5 0 0 1 12 3.5A4 4 0 0 1 14 11.5Z" fill="#c4d6f7" stroke="#86a4de" />
    <path d="M15.5 26.5A3.5 3.5 0 0 1 16 20.5A5 5 0 0 1 24.5 18.5A4.2 4.2 0 0 1 26.5 26.5Z" fill="#cfdefa" stroke="#86a4de" />
  </svg>
);
const StartIcon = () => (
  <svg width="29" height="29" viewBox="0 0 29 29">
    <defs>
      <linearGradient id="win" x1="0" y1="0" x2="1" y2="1">
        <stop offset="0" stopColor="#4fd0fb" />
        <stop offset="1" stopColor="#0078d4" />
      </linearGradient>
    </defs>
    <path d="M1 0H14V14H0V1ZM15 0H28L29 1V14H15ZM0 15H14V29H1L0 28ZM15 15H29V28L28 29H15Z" fill="url(#win)" />
  </svg>
);
const MagnifierIcon = () => (
  <svg width="19" height="19" viewBox="0 0 19 19" fill="none" stroke="#222" strokeWidth="2">
    <circle cx="8" cy="8" r="6.6" />
    <path d="M12.5 12.5L18 18" strokeWidth="2.4" />
  </svg>
);
const BingIcon = () => (
  <svg width="27" height="27" viewBox="0 0 27 27">
    <defs>
      <linearGradient id="bing" x1="0" y1="0" x2="1" y2="1">
        <stop offset="0" stopColor="#29c3ee" />
        <stop offset="1" stopColor="#1b55d8" />
      </linearGradient>
    </defs>
    <path d="M2 25.5L2.2 13.5A11.8 11.8 0 1 1 13.8 25Q10 25.5 2 25.5Z" fill="#fff" stroke="url(#bing)" strokeWidth="1.9" />
    <path d="M8.500 5.5L11.700 7V16.500L14.500 15L12.500 10L18 12Q20 14.500 18 17L11.700 21L8.500 19Z" fill="url(#bing)" />
  </svg>
);
const TaskViewIcon = () => (
  <svg width="29" height="29" viewBox="0 0 29 29">
    <rect x="0" y="8" width="22" height="20" rx="1" fill="#2c2b2a" />
    <rect x="7" y="0" width="22" height="20" rx="1" fill="#f7f6f5" />
    <rect x="7" y="8" width="15" height="12" fill="#bcbab8" />
  </svg>
);
const ChatIcon = () => (
  <svg width="29" height="29" viewBox="0 0 29 29">
    <defs>
      <linearGradient id="chat" x1="0" y1="1" x2="1" y2="0">
        <stop offset="0" stopColor="#5450b8" />
        <stop offset="1" stopColor="#7a93e4" />
      </linearGradient>
    </defs>
    <path d="M1 28L2.5 21A14 14 0 1 1 9 27.2Z" fill="url(#chat)" />
    <rect x="6" y="9" width="12" height="11" rx="1.5" fill="#fff" />
    <path d="M19 13L22.5 10V19L19 16Z" fill="#fff" />
  </svg>
);
const ChromeIcon = () => (
  <svg width="30" height="30" viewBox="0 0 30 30">
    <circle cx="15" cy="15" r="15" fill="#23a04b" />
    <path d="M15 15L28 7.5A15 15 0 0 1 15 30L21.5 18.75Z" fill="#fcc934" />
    <path d="M15 7.5H28A15 15 0 0 1 15 30L21.5 18.75Z" fill="#fcc934" />
    <path d="M2 7.5A15 15 0 0 1 28 7.5H15A7.5 7.5 0 0 0 8 12.5L7.8 17.500Z" fill="#e33b2e" />
    <circle cx="15" cy="15" r="7.3" fill="#fff" />
    <circle cx="15" cy="15" r="5.8" fill="#3b7ded" />
  </svg>
);
const StoreIcon = () => (
  <svg width="29" height="30" viewBox="0 0 29 30">
    <path d="M8 7V1.5H21V7" fill="none" stroke="#29b0ee" strokeWidth="2.4" />
    <path d="M0 6H29V26Q29 29.5 25 29.5H4Q0 29.5 0 26Z" fill="#174f8c" />
    <rect x="9" y="12" width="5" height="5" fill="#f25022" />
    <rect x="15" y="12" width="5" height="5" fill="#7fba00" />
    <rect x="9" y="18" width="5" height="5" fill="#00a4ef" />
    <rect x="15" y="18" width="5" height="5" fill="#ffb900" />
  </svg>
);
const EdgeIcon = () => (
  <svg width="30" height="30" viewBox="0 0 30 30">
    <defs>
      <linearGradient id="edge" x1="0" y1="0" x2="1" y2=".4">
        <stop offset="0" stopColor="#1fa4e8" />
        <stop offset=".55" stopColor="#33c3cf" />
        <stop offset="1" stopColor="#66dd55" />
      </linearGradient>
    </defs>
    <path d="M0 15A15 15 0 0 1 30 13Q30 20 22 20Q17.5 20 18 17Q19 13 14 12Q5 11 0 15Z" fill="url(#edge)" />
    <path d="M0 15Q2 9 10 9.2Q15 9.5 17.5 13Q11 12 11 18Q12 25 20 25Q24 25 27.5 23Q23 30 15 30A15 15 0 0 1 0 15Z" fill="#0d76cf" />
    <path d="M11.2 16Q8 24 15 29.5Q23 31 27.8 23Q24 25 20 25Q12 24.5 11.2 16Z" fill="#11509c" />
  </svg>
);
const FolderIcon = () => (
  <svg width="30" height="28" viewBox="0 0 30 28">
    <path d="M0 2Q0 .5 1.5 .5H10L13 3.5V9H0Z" fill="#d99a06" />
    <path d="M0 7L12 6L14 3.5H30V26H0Z" fill="#fccb3b" />
    <path d="M4.5 27V21Q4.5 18.5 7 18.5H23Q25.5 18.5 25.5 21V27Z" fill="#1273c9" />
    <path d="M9 22.5H21" stroke="#0c4f94" strokeWidth="1.5" />
  </svg>
);
const AppWindowIcon = () => (
  <svg width="31" height="24" viewBox="0 0 31 24">
    <rect x=".6" y=".6" width="29.8" height="22.8" fill="#fdfdfd" stroke="#8a8a8a" strokeWidth="1.2" />
    <rect x="0" y="0" width="31" height="3" fill="#7e7e7e" />
    <rect x="9.5" y="5" width="12" height="15" rx="1" fill="#0f74cf" />
    <path d="M3.5 6H8M3.5 8.5H8M3.5 11H8M3.5 13.5H8M3.5 16H8M23.5 6H28M23.5 8.5H28M23.5 11H28" stroke="#999" />
  </svg>
);

/* ---------- data ---------- */
const menus: [string, number, number][] = [
  ["File", 36, 0.4],
  ["Edit", 39, 0.3],
  ["Diagram", 71, 0.32],
  ["Code", 48, 0.3],
  ["Settings", 66, 0.1],
  ["Help", 40, 0.6],
];
const tree: { icon: "case" | "actor" | "diagram"; name: string; gap?: number }[] = [
  { icon: "case", name: "Register for voter ID", gap: 0.07 },
  { icon: "actor", name: "System Adim", gap: 0.23 },
  { icon: "case", name: "Tolly checking" },
  { icon: "diagram", name: "use case diagram", gap: 0.02 },
  { icon: "case", name: "Use case Digram of Votin...", gap: 0.19 },
  { icon: "case", name: "verify profile" },
  { icon: "case", name: "View result" },
  { icon: "actor", name: "Voter" },
];
const debug: [string, boolean][] = [
  ["umlwidgets", false],
  ["umbrello", true],
  ["cppparser", false],
  ["dialogs", true],
  ["codeimport", true],
  ["", false],
  ["refactoring", true],
  ["", false],
];
const apps = [TaskViewIcon, ChatIcon, ChromeIcon, StoreIcon, EdgeIcon, FolderIcon, ChromeIcon];

type DockHeaderProps = { h: number; line?: boolean; before?: string; hot: string; after: string; gap?: number; drop?: number };
const DockHeader = ({ h, line, before = "", hot, after, gap, drop = 2 }: DockHeaderProps) => (
  <DockHead $h={h} $line={line} $drop={drop}>
    <DockTitle $small $gap={gap}>
      {before}
      <Mnemonic>{hot}</Mnemonic>
      {after}
    </DockTitle>
    <DockButtons>
      <FloatIcon />
      <CrossIcon />
    </DockButtons>
  </DockHead>
);

export default function App() {
  return (
    <Screen>
      <Global />
      <TitleBar>
        <UmbrelloIcon s={21} />
        <TitleText $gap={0.07}>1.vote.xmi [modified] – Umbrello UML Modeller</TitleText>
        <WindowButtons>
          <svg width="12" height="13" viewBox="0 0 12 13"><path d="M0 6.5H12" stroke="#000" /></svg>
          <svg width="13" height="13" viewBox="0 0 13 13" fill="none" stroke="#000" strokeWidth="1.2">
            <rect x=".7" y="3" width="9" height="9" rx="1.5" />
            <path d="M3 1H9.5Q12 1 12 3.5V10" />
          </svg>
          <CrossIcon s={13} w={0.7} />
        </WindowButtons>
      </TitleBar>
      <MenuBar>
        {menus.map(([name, w, gap]) => (
          <MenuItem key={name} $w={w} $gap={gap}>{name}</MenuItem>
        ))}
      </MenuBar>
      <Toolbar>
        <Tool $w={66}><NewIcon /><ToolLabel $small $gap={0}>New</ToolLabel></Tool>
        <Tool $w={72}><OpenIcon /><ToolLabel $small $gap={-0.2}>Open</ToolLabel></Tool>
        <Tool $w={65}><SaveIcon /><ToolLabel $small $gap={0.4}>Save</ToolLabel></Tool>
        <Tool $w={29}><PrintIcon /></Tool>
        <Tool $w={29}><PrintIcon preview /></Tool>
        <ToolSeparator $after={5} />
        <Tool $w={29}><UndoIcon /></Tool>
        <Tool $w={33}><UndoIcon redo /></Tool>
        <Tool $w={60}><CutIcon /><ToolLabel $small>Cut</ToolLabel></Tool>
        <Tool $w={67}><CopyIcon /><ToolLabel $small $gap={0}>Copy</ToolLabel></Tool>
        <Tool $w={70}><PasteIcon /><ToolLabel $small $gap={0}>Paste</ToolLabel></Tool>
        <ToolSeparator $after={7} />
        <Tool $w={60}><FindIcon /><ToolLabel $small $gap={0}>Find</ToolLabel></Tool>
      </Toolbar>
      <Toolbar>
        <Tool $w={25.5}><CursorIcon /></Tool>
        <Tool $w={29}><ClassIcon /></Tool>
        <Tool $w={30}><PackageIcon /></Tool>
        <Tool $w={29.5}><NoteIcon /></Tool>
        <Tool $w={28}><BoxIcon /></Tool>
        <Tool $w={29}><ActorIcon /></Tool>
        <Tool $w={34.5}><UseCaseIcon /></Tool>
        <Tool $w={29}><LineIcon kind="line" /></Tool>
        <Tool $w={29}><LineIcon kind="arrow" /></Tool>
        <Tool $w={29}><LineIcon kind="dash" /></Tool>
        <Tool $w={29}><LineIcon kind="gen" /></Tool>
      </Toolbar>

      <Workspace>
        <LeftColumn>
          <Dock $h={206} $first>
            <DockHeader h={22} hot="S" after="tereotypes" drop={1} />
            <SunkenBox>
              <Table>
                <HeadCell>
                  <Label $gap={0.38}>Name{"      "}</Label>
                  <SortMark width="17" height="18" viewBox="0 0 17 18" fill="none">
                    <path d="M16 1.5H1L8 16.5" stroke={SHADE} />
                    <path d="M16 1.5L8.5 16.5" stroke="#fff" />
                  </SortMark>
                </HeadCell>
                <HeadCell><Label>Usage</Label></HeadCell>
                <Cell><Label>folder</Label></Cell>
                <Cell><Label>1</Label></Cell>
                <Cell><Label>datatype</Label></Cell>
                <Cell><Label>11</Label></Cell>
              </Table>
            </SunkenBox>
          </Dock>
          <Dock $h={206}>
            <DockHeader h={22} hot="T" after="ree View" gap={0.45} />
            <SunkenBox>
              <TreeList>
                {tree.map((t, i) => (
                  <TreeRow key={t.name}>
                    <Branch $last={i === tree.length - 1} />
                    {t.icon === "case" && <UseCaseIcon w={17} h={10} />}
                    {t.icon === "actor" && <ActorIcon s={17} />}
                    {t.icon === "diagram" && <DiagramFileIcon kind="use" s={17} />}
                    <TreeText $gap={t.gap}>{t.name}</TreeText>
                  </TreeRow>
                ))}
              </TreeList>
              <ScrollTrack>
                <ScrollButton><Arrow dir="up" /></ScrollButton>
                <ScrollGap />
                <ScrollThumb $h={44} />
                <ScrollButton><Arrow dir="down" /></ScrollButton>
              </ScrollTrack>
            </SunkenBox>
          </Dock>
          <Dock $h={208}>
            <DockHeader h={24} hot="D" after="ebug" gap={-0.3} />
            <SunkenBox>
              <DebugList>
                <DebugHead><Label $gap={0.22}>Class Name</Label></DebugHead>
                {debug.map(([name, on], i) => (
                  <DebugRow key={i} $alt={i % 2 === 1}>
                    <Expander />
                    <Check on={on} />
                    <DebugText>{name}</DebugText>
                  </DebugRow>
                ))}
              </DebugList>
              <ScrollTrack>
                <ScrollButton><Arrow dir="up" /></ScrollButton>
                <ScrollThumb $h={116} />
                <ScrollGap />
                <ScrollButton><Arrow dir="down" /></ScrollButton>
              </ScrollTrack>
            </SunkenBox>
          </Dock>
          <Dock $h={247} $last>
            <DockHeader h={23} line before="Doc" hot="u" after="mentation" gap={-0.28} drop={3} />
            <DocBar>
              <UmbrelloIcon s={18} />
              <DocButton><Label $small $gap={-0.25}>UML Model</Label></DocButton>
              <DocCheck />
            </DocBar>
            <SunkenBox />
            <DockTabs>
              <DockTab $w={113} $on><Label $small $gap={-0.28}>Documentation</Label></DockTab>
              <DockTab $w={131}><Label $small $gap={-0.05}>Command history</Label></DockTab>
              <DockTab $w={47}><Label $small $gap={-0.3}>Log</Label></DockTab>
            </DockTabs>
          </Dock>
        </LeftColumn>
        <Splitter $w={8} />
        <Centre>
          <TabStrip>
            <NewTab><NewTabIcon /></NewTab>
            <DiagramTab $w={155}>
              <DiagramFileIcon kind="class" />
              <TabText $small>class diagram</TabText>
              <CloseBox><CrossIcon c="#fff" w={1.8} /></CloseBox>
            </DiagramTab>
            <DiagramTab $w={178} $on>
              <DiagramFileIcon kind="use" />
              <TabText $small $gap={0.16}>use case diagram</TabText>
              <CloseBox $on><CrossIcon c="#fff" w={1.8} /></CloseBox>
            </DiagramTab>
          </TabStrip>
          <CanvasFrame>
            <DiagramCanvas />
            <VScroll>
              <ScrollButton><Arrow dir="up" c={SHADE} /></ScrollButton>
              <ScrollButton><Arrow dir="down" c={SHADE} /></ScrollButton>
            </VScroll>
            <HScroll>
              <ScrollButton><Arrow dir="left" c={SHADE} /></ScrollButton>
              <ScrollButton><Arrow dir="right" c={SHADE} /></ScrollButton>
            </HScroll>
            <Corner />
          </CanvasFrame>
        </Centre>
        <Splitter $w={7} />
        <RightColumn>
          <DockHeader h={22} hot="B" after="ird's eye view" gap={0.04} />
          <Overview><OverviewDrawing /></Overview>
        </RightColumn>
      </Workspace>

      <StatusBar>
        <StatusCell $w={48}><Label $gap={0.1}>Ready.</Label></StatusCell>
        <StatusSpace />
        <StatusCell $w={764}><ZoomValue>91%</ZoomValue></StatusCell>
        <ZoomButtons>
          <Label $gap={0.36}>Fit</Label>
          <ZoomDivider />
          <Label $gap={0.09}>100%</Label>
        </ZoomButtons>
        <StatusCell $w={34} $after={2}><Magnify /></StatusCell>
        <SliderCell $w={104} $after={3}>
          <Groove $w={14} />
          <SliderThumb />
          <Groove $w={73} />
        </SliderCell>
        <StatusCell $w={31}><Magnify plus /></StatusCell>
      </StatusBar>

      <Taskbar>
        <Weather>
          <WeatherIcon />
          <Stack>
            <Label $gap={0.04} $color="#26221f">30°C</Label>
            <Label $gap={0} $color="#6d645f">Partly sunny</Label>
          </Stack>
        </Weather>
        <StartIcon />
        <SearchBox>
          <MagnifierIcon />
          <SearchText>Search</SearchText>
          <BingIcon />
        </SearchBox>
        <Apps>
          {apps.map((Icon, i) => (
            <AppSlot key={i}>
              <Icon />
              <AppMark $kind={i === 5 ? "dot" : undefined} />
            </AppSlot>
          ))}
          <AppSlot $on>
            <AppWindowIcon />
            <AppMark $kind="bar" />
          </AppSlot>
        </Apps>
        <Tray>
          <svg width="14" height="9" viewBox="0 0 14 9" fill="none" stroke="#222" strokeWidth="1.6"><path d="M1 8L7 2L13 8" /></svg>
          <Stack $align="center" $w={78}>
            <Label>ENG</Label>
            <Label>IN</Label>
          </Stack>
          <TrayIcons>
            <svg width="20" height="15" viewBox="0 0 20 15" fill="none" stroke="#222" strokeWidth="1.4">
              <path d="M1 6Q10 -3 19 6M4 9Q10 3 16 9M6.8 11.5Q10 8.5 13.2 11.5" />
              <circle cx="10" cy="13" r="1.3" fill="#222" />
            </svg>
            <svg width="20" height="15" viewBox="0 0 20 15" fill="none" stroke="#222" strokeWidth="1.2">
              <path d="M1 5H4L8.5 1V14L4 10H1ZM12 4.5L18.5 11M18.5 4.5L12 11" />
            </svg>
            <svg width="21" height="16" viewBox="0 0 21 16">
              <rect x="1" y="4" width="16.5" height="11" rx="2.5" fill="none" stroke="#111" strokeWidth="1.4" />
              <rect x="3.5" y="6.5" width="9" height="6" fill="#111" />
              <path d="M18.5 7.5H20.5V11.5H18.5Z" fill="#111" />
              <path d="M4.5 0L0 6H3L2 10L7.5 4H4.5Z" fill="#111" stroke="#f9e7df" strokeWidth=".5" />
            </svg>
          </TrayIcons>
          <Stack $align="flex-end" $w={77}>
            <Label $gap={0}>09:03</Label>
            <Label $gap={0.38}>09-08-2023</Label>
          </Stack>
        </Tray>
      </Taskbar>
    </Screen>
  );
}
